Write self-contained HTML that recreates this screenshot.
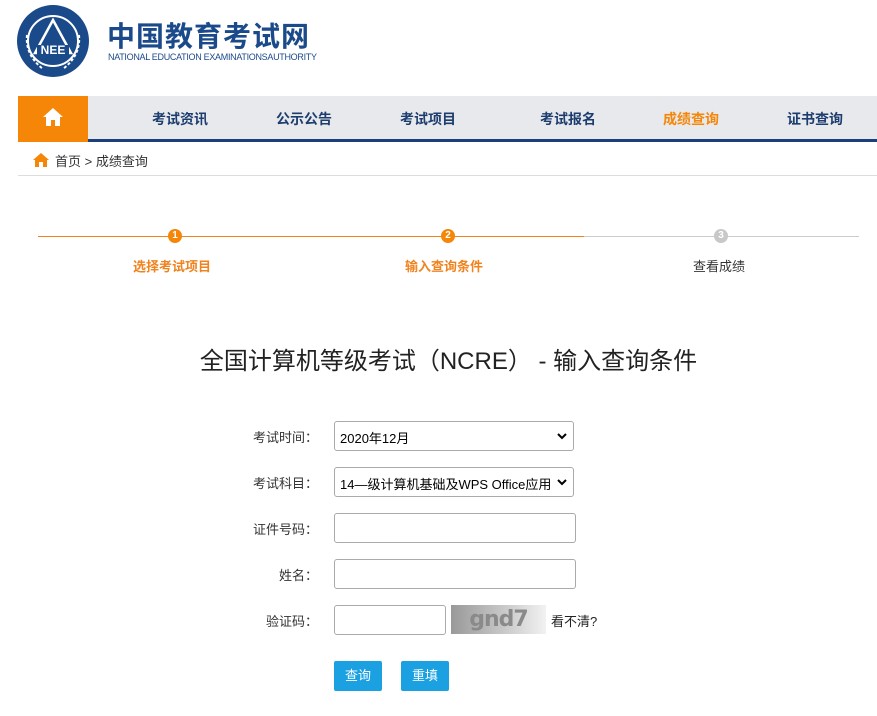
<!DOCTYPE html>
<html><head><meta charset="utf-8"><style>
*{margin:0;padding:0;box-sizing:border-box}
body{width:877px;height:716px;background:#fff;font-family:"Liberation Sans","Noto Sans CJK SC",sans-serif;position:relative;overflow:hidden;color:#333}
.abs{position:absolute}
.nav{left:18px;top:96px;width:859px;height:46px;background:#e8e9ec;border-bottom:3px solid #1b3f7a}
.home{left:18px;top:96px;width:70px;height:46px;background:#f58608}
.nav span{position:absolute;top:13px;font-size:14px;font-weight:bold;color:#1d3d6e}
.step{font-size:13px;font-weight:bold;color:#f0831e}
.circ{width:14px;height:14px;border-radius:50%;color:#fff;font-size:10px;text-align:center;line-height:14px;font-weight:bold}
.lbl{font-size:13px;color:#333;text-align:right;width:80px}
.sel,.inp{border:1px solid #aaa;border-radius:3px;background:#fff;height:30px;font-size:13px;color:#000;padding:6px 5px}
.chev{position:absolute;right:6px;top:10px}
.btn{background:#1ba1e2;color:#fff;font-size:13px;height:30px;border-radius:2px;text-align:center;line-height:30px}
</style></head><body>
<svg class="abs" style="left:17px;top:5px" width="72" height="72" viewBox="0 0 72 72">
<circle cx="36" cy="36" r="36" fill="#1b4a8a"/>
<circle cx="36" cy="36" r="25" fill="none" stroke="#fff" stroke-width="2"/>
<path d="M36 15 L54 48 L18 48 Z" fill="none" stroke="#fff" stroke-width="2.5"/>
<rect x="20" y="40" width="32" height="10" fill="#1b4a8a"/>
<text x="36" y="49" fill="#fff" font-size="12" font-weight="bold" text-anchor="middle" font-family="Liberation Sans">NEE</text>
<path d="M10 30 Q8 50 26 64 M62 30 Q64 50 46 64" fill="none" stroke="#fff" stroke-width="2" stroke-dasharray="3 2"/>
</svg>
<div class="abs" style="left:107px;top:17px;font-size:28px;font-weight:bold;color:#1b4a8a;letter-spacing:1px;font-family:'Noto Sans CJK SC',sans-serif;line-height:36px">中国教育考试网</div>
<div class="abs" style="left:108px;top:52px;font-size:9px;color:#1b4a8a;letter-spacing:-0.3px">NATIONAL EDUCATION EXAMINATIONSAUTHORITY</div>
<div class="abs nav"><span style="left:134px">考试资讯</span><span style="left:258px">公示公告</span><span style="left:382px">考试项目</span><span style="left:522px">考试报名</span><span style="left:645px;color:#f58608">成绩查询</span><span style="left:769px">证书查询</span></div>
<div class="abs home"><svg style="position:absolute;left:24px;top:11px" width="22" height="20" viewBox="0 0 22 20"><path d="M11 1 L1 10 L4 10 L4 19 L9 19 L9 13 L13 13 L13 19 L18 19 L18 10 L21 10 Z" fill="#fff"/></svg></div>
<svg class="abs" style="left:33px;top:153px" width="16" height="14" viewBox="0 0 16 14"><path d="M8 0 L0 7 L2 7 L2 14 L6 14 L6 9 L10 9 L10 14 L14 14 L14 7 L16 7 Z" fill="#f58608"/></svg>
<div class="abs" style="left:55px;top:151px;font-size:13px;color:#333">首页 &gt; 成绩查询</div>
<div class="abs" style="left:18px;top:175px;width:859px;height:1px;background:#ddd"></div>
<div class="abs" style="left:38px;top:236px;width:546px;height:1px;background:#f0831e"></div>
<div class="abs" style="left:584px;top:236px;width:275px;height:1px;background:#ccc"></div>
<div class="abs circ" style="left:168px;top:229px;background:#f58608">1</div>
<div class="abs circ" style="left:441px;top:229px;background:#f58608">2</div>
<div class="abs circ" style="left:714px;top:229px;background:#c8c8c8">3</div>
<div class="abs step" style="left:133px;top:256px">选择考试项目</div>
<div class="abs step" style="left:405px;top:256px">输入查询条件</div>
<div class="abs" style="left:693px;top:256px;font-size:13px;color:#333">查看成绩</div>
<div class="abs" style="left:10px;width:877px;top:341px;text-align:center;font-size:24px;color:#222">全国计算机等级考试（NCRE） - 输入查询条件</div>
<div class="abs lbl" style="left:238px;top:427px">考试时间：</div>
<div class="abs sel" style="left:334px;top:421px;width:240px">2020年12月<svg class="chev" width="10" height="8" viewBox="0 0 10 8"><path d="M1 2 L5 6 L9 2" fill="none" stroke="#000" stroke-width="2"/></svg></div>
<div class="abs lbl" style="left:238px;top:473px">考试科目：</div>
<div class="abs sel" style="left:334px;top:467px;width:240px;white-space:nowrap;overflow:hidden">14—级计算机基础及WPS Office应用<svg class="chev" width="10" height="8" viewBox="0 0 10 8" style="background:#fff"><path d="M1 2 L5 6 L9 2" fill="none" stroke="#000" stroke-width="2"/></svg></div>
<div class="abs lbl" style="left:238px;top:519px">证件号码：</div>
<div class="abs inp" style="left:334px;top:513px;width:242px"></div>
<div class="abs lbl" style="left:238px;top:565px">姓名：</div>
<div class="abs inp" style="left:334px;top:559px;width:242px"></div>
<div class="abs lbl" style="left:238px;top:611px">验证码：</div>
<div class="abs inp" style="left:334px;top:605px;width:112px"></div>
<div class="abs" style="left:451px;top:605px;width:95px;height:29px;background:linear-gradient(90deg,#999,#ccc 60%,#f2f2f2);font:bold 22px 'DejaVu Sans',sans-serif;color:#8a8a8a;text-align:center;line-height:29px;letter-spacing:-1px">gnd7</div>
<div class="abs" style="left:551px;top:611px;font-size:13px;color:#222">看不清?</div>
<div class="abs btn" style="left:334px;top:661px;width:48px">查询</div>
<div class="abs btn" style="left:401px;top:661px;width:48px">重填</div>
</body></html>
